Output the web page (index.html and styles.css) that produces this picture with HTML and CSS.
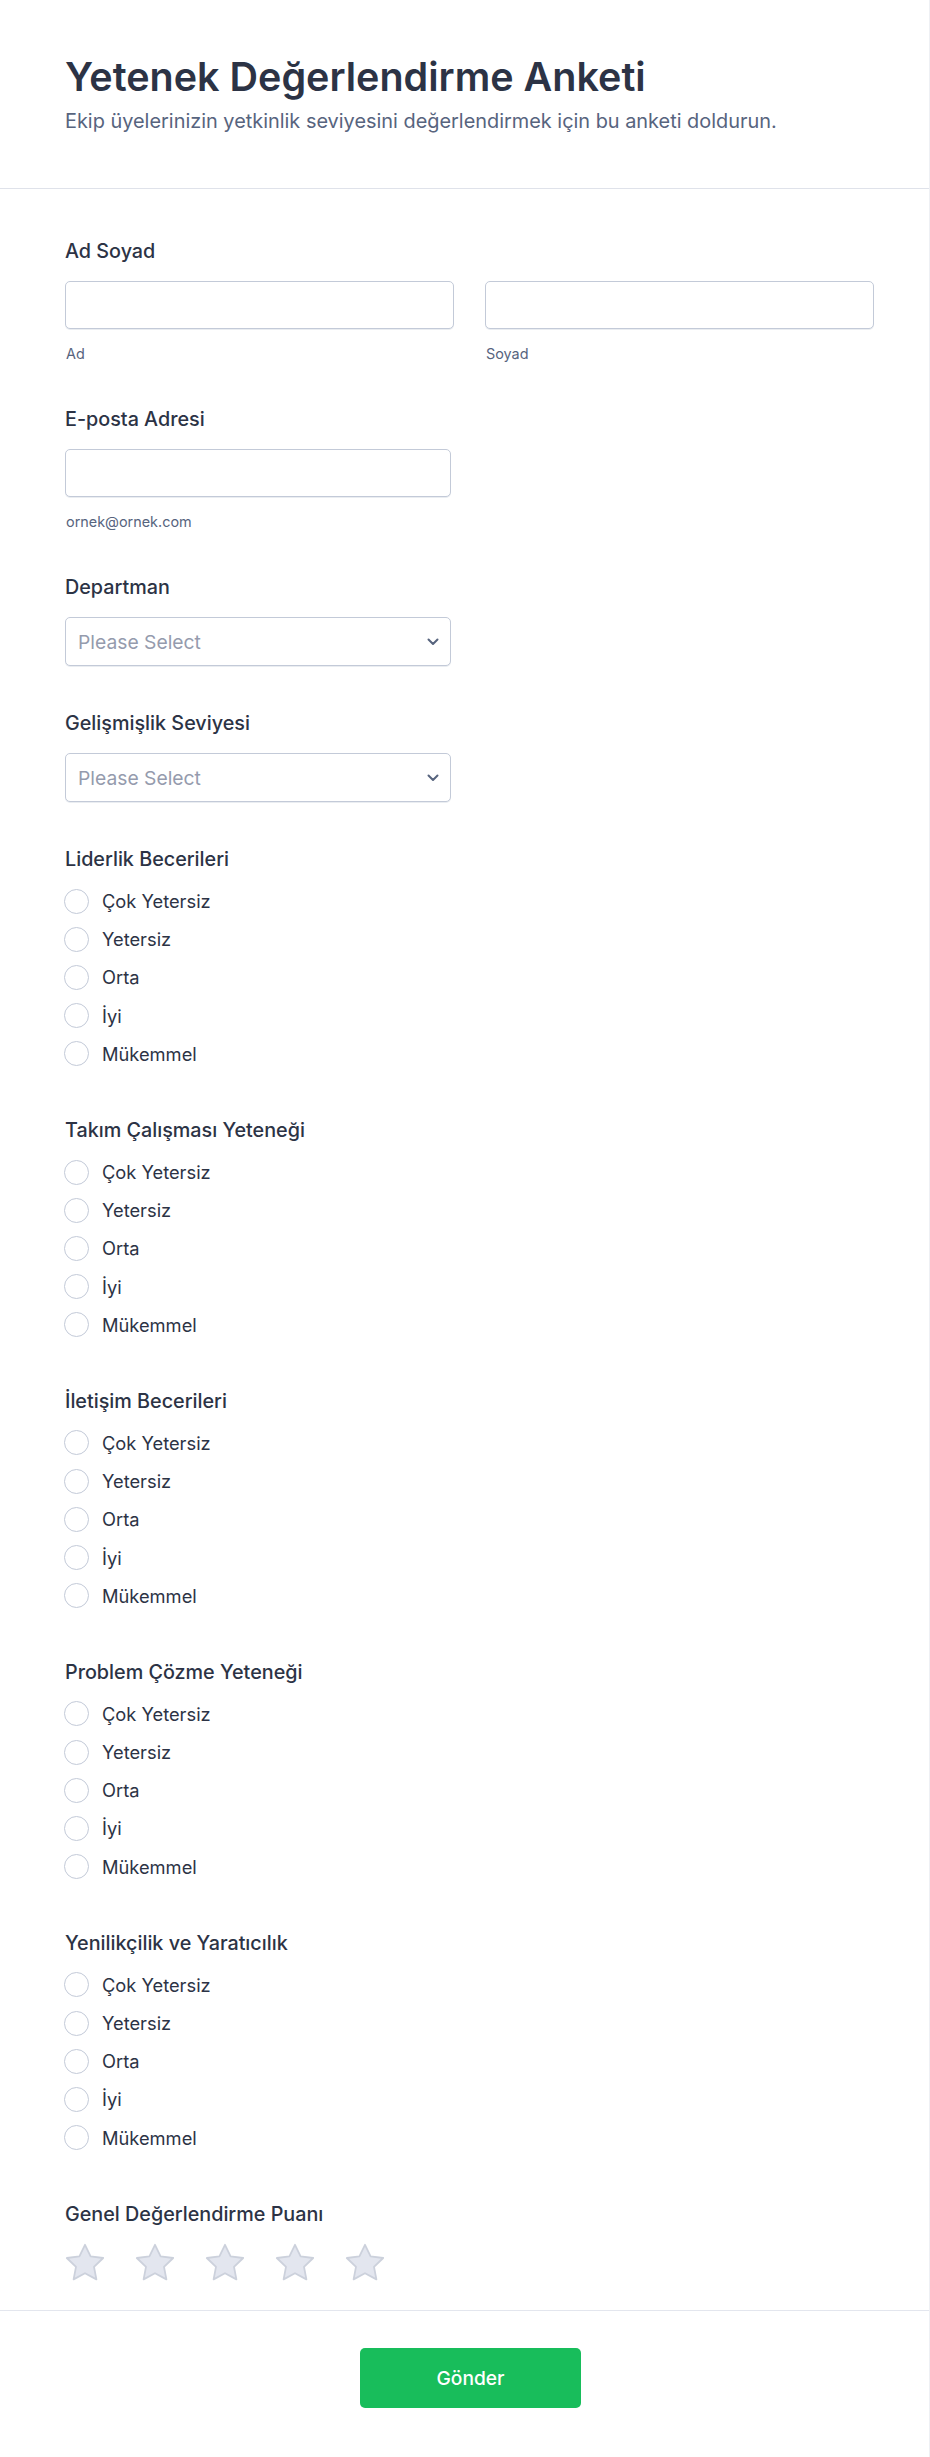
FILE: index.html
```html
<!DOCTYPE html>
<html lang="tr">
<head>
<meta charset="utf-8">
<title>Yetenek Değerlendirme Anketi</title>
<link rel="stylesheet" href="styles.css">
</head>
<body>
<div class="page">
  <header class="header">
    <h1 class="title">Yetenek Değerlendirme Anketi</h1>
    <p class="subtitle">Ekip üyelerinizin yetkinlik seviyesini değerlendirmek için bu anketi doldurun.</p>
  </header>

  <form class="form">
    <div class="field">
      <label class="label">Ad Soyad</label>
      <div class="name-row">
        <div class="name-col">
          <input class="input" type="text">
          <span class="sublabel">Ad</span>
        </div>
        <div class="name-col">
          <input class="input" type="text">
          <span class="sublabel">Soyad</span>
        </div>
      </div>
    </div>

    <div class="field">
      <label class="label">E-posta Adresi</label>
      <input class="input input-single" type="email">
      <span class="sublabel">ornek@ornek.com</span>
    </div>

    <div class="field">
      <label class="label">Departman</label>
      <div class="select-wrap">
        <select class="select"><option>Please Select</option></select>
        <svg class="chevron" width="12" height="8" viewBox="0 0 12 8"><path d="M1.5 1.5 6 6l4.5-4.5" fill="none" stroke="#57647e" stroke-width="2" stroke-linecap="round" stroke-linejoin="round"/></svg>
      </div>
    </div>

    <div class="field">
      <label class="label">Gelişmişlik Seviyesi</label>
      <div class="select-wrap">
        <select class="select"><option>Please Select</option></select>
        <svg class="chevron" width="12" height="8" viewBox="0 0 12 8"><path d="M1.5 1.5 6 6l4.5-4.5" fill="none" stroke="#57647e" stroke-width="2" stroke-linecap="round" stroke-linejoin="round"/></svg>
      </div>
    </div>

    <div class="field">
      <label class="label">Liderlik Becerileri</label>
      <div class="choices">
        <label class="choice"><input class="radio" type="radio" name="q1"><span>Çok Yetersiz</span></label>
        <label class="choice"><input class="radio" type="radio" name="q1"><span>Yetersiz</span></label>
        <label class="choice"><input class="radio" type="radio" name="q1"><span>Orta</span></label>
        <label class="choice"><input class="radio" type="radio" name="q1"><span>İyi</span></label>
        <label class="choice"><input class="radio" type="radio" name="q1"><span>Mükemmel</span></label>
      </div>
    </div>

    <div class="field">
      <label class="label">Takım Çalışması Yeteneği</label>
      <div class="choices">
        <label class="choice"><input class="radio" type="radio" name="q2"><span>Çok Yetersiz</span></label>
        <label class="choice"><input class="radio" type="radio" name="q2"><span>Yetersiz</span></label>
        <label class="choice"><input class="radio" type="radio" name="q2"><span>Orta</span></label>
        <label class="choice"><input class="radio" type="radio" name="q2"><span>İyi</span></label>
        <label class="choice"><input class="radio" type="radio" name="q2"><span>Mükemmel</span></label>
      </div>
    </div>

    <div class="field">
      <label class="label">İletişim Becerileri</label>
      <div class="choices">
        <label class="choice"><input class="radio" type="radio" name="q3"><span>Çok Yetersiz</span></label>
        <label class="choice"><input class="radio" type="radio" name="q3"><span>Yetersiz</span></label>
        <label class="choice"><input class="radio" type="radio" name="q3"><span>Orta</span></label>
        <label class="choice"><input class="radio" type="radio" name="q3"><span>İyi</span></label>
        <label class="choice"><input class="radio" type="radio" name="q3"><span>Mükemmel</span></label>
      </div>
    </div>

    <div class="field">
      <label class="label">Problem Çözme Yeteneği</label>
      <div class="choices">
        <label class="choice"><input class="radio" type="radio" name="q4"><span>Çok Yetersiz</span></label>
        <label class="choice"><input class="radio" type="radio" name="q4"><span>Yetersiz</span></label>
        <label class="choice"><input class="radio" type="radio" name="q4"><span>Orta</span></label>
        <label class="choice"><input class="radio" type="radio" name="q4"><span>İyi</span></label>
        <label class="choice"><input class="radio" type="radio" name="q4"><span>Mükemmel</span></label>
      </div>
    </div>

    <div class="field">
      <label class="label">Yenilikçilik ve Yaratıcılık</label>
      <div class="choices">
        <label class="choice"><input class="radio" type="radio" name="q5"><span>Çok Yetersiz</span></label>
        <label class="choice"><input class="radio" type="radio" name="q5"><span>Yetersiz</span></label>
        <label class="choice"><input class="radio" type="radio" name="q5"><span>Orta</span></label>
        <label class="choice"><input class="radio" type="radio" name="q5"><span>İyi</span></label>
        <label class="choice"><input class="radio" type="radio" name="q5"><span>Mükemmel</span></label>
      </div>
    </div>

    <div class="field">
      <label class="label">Genel Değerlendirme Puanı</label>
      <div class="stars">
        <svg class="star" viewBox="2.5 2.5 19 18"><path d="M12 2.9l2.8 5.8 6.3.8-4.6 4.4 1.2 6.3L12 17.1l-5.7 3.1 1.2-6.3-4.6-4.4 6.3-.8z"/></svg>
        <svg class="star" viewBox="2.5 2.5 19 18"><path d="M12 2.9l2.8 5.8 6.3.8-4.6 4.4 1.2 6.3L12 17.1l-5.7 3.1 1.2-6.3-4.6-4.4 6.3-.8z"/></svg>
        <svg class="star" viewBox="2.5 2.5 19 18"><path d="M12 2.9l2.8 5.8 6.3.8-4.6 4.4 1.2 6.3L12 17.1l-5.7 3.1 1.2-6.3-4.6-4.4 6.3-.8z"/></svg>
        <svg class="star" viewBox="2.5 2.5 19 18"><path d="M12 2.9l2.8 5.8 6.3.8-4.6 4.4 1.2 6.3L12 17.1l-5.7 3.1 1.2-6.3-4.6-4.4 6.3-.8z"/></svg>
        <svg class="star" viewBox="2.5 2.5 19 18"><path d="M12 2.9l2.8 5.8 6.3.8-4.6 4.4 1.2 6.3L12 17.1l-5.7 3.1 1.2-6.3-4.6-4.4 6.3-.8z"/></svg>
      </div>
    </div>
  </form>

  <footer class="footer">
    <button class="submit" type="button">Gönder</button>
  </footer>
</div>
</body>
</html>
```
FILE: styles.css
```css
* { box-sizing: border-box; }

html, body {
  margin: 0;
  padding: 0;
  background: #ffffff;
}

body {
  font-family: Inter, "Noto Sans", "Liberation Sans", sans-serif;
  color: #2c3345;
}

.page {
  width: 930px;
  border-right: 1px solid #eef0f4;
}

.header {
  padding: 53px 65px 53px;
  border-bottom: 1px solid #dfe2ea;
}

.title {
  margin: 0;
  font-size: 39.5px;
  line-height: 48px;
  font-weight: 600;
  color: #2c3345;
}

.subtitle {
  margin: 6px 0 0;
  font-size: 19.9px;
  line-height: 28px;
  font-weight: 400;
  color: #57647e;
}

.form {
  padding: 50px 56px 30px 65px;
  display: flex;
  flex-direction: column;
  gap: 45px;
}

.field {
  display: flex;
  flex-direction: column;
  align-items: flex-start;
}

.label {
  display: block;
  font-size: 19.75px;
  line-height: 24px;
  font-weight: 500;
  color: #2c3345;
  margin-bottom: 18px;
}

.name-row {
  display: grid;
  grid-template-columns: 389px 389px;
  column-gap: 31px;
  width: 100%;
}

.name-col {
  display: flex;
  flex-direction: column;
}

.input {
  display: block;
  width: 100%;
  height: 48px;
  border: 1px solid #c3cad8;
  border-radius: 5px;
  background: #fff;
  font-family: inherit;
  font-size: 19.3px;
  color: #2c3345;
  padding: 0 12px;
  outline: none;
  box-shadow: 0 1px 0 rgba(195, 202, 216, 0.35);
}

.input-single {
  width: 386px;
}

.sublabel {
  display: block;
  margin-top: 17px;
  font-size: 14.4px;
  line-height: 16px;
  color: #57647e;
  padding-left: 1px;
}

.select-wrap {
  position: relative;
  width: 386px;
  height: 49px;
}

.select {
  display: block;
  width: 100%;
  height: 49px;
  -webkit-appearance: none;
  appearance: none;
  border: 1px solid #c3cad8;
  border-radius: 5px;
  background: #fff;
  font-family: inherit;
  font-size: 19.3px;
  color: #959bad;
  padding: 0 36px 0 12px;
  outline: none;
  box-shadow: 0 1px 0 rgba(195, 202, 216, 0.35);
}

.chevron {
  position: absolute;
  right: 12px;
  top: 21px;
  pointer-events: none;
}

.choices {
  display: flex;
  flex-direction: column;
  margin-top: -7px;
}

.choice {
  display: flex;
  align-items: center;
  height: 38.2px;
  gap: 13px;
  font-size: 18.3px;
  color: #2c3345;
}

.radio {
  -webkit-appearance: none;
  appearance: none;
  margin: 0 0 0 -1px;
  width: 25px;
  height: 25px;
  border: 1.5px solid #c3cad8;
  border-radius: 50%;
  background: #fff;
  flex: none;
}

.stars {
  display: flex;
  gap: 32px;
  margin-top: 0;
  padding-left: 1px;
}

.star {
  width: 38px;
  height: 36px;
  overflow: visible;
  fill: #e3e6ef;
  stroke: #ccd1dc;
  stroke-width: 0.9;
  stroke-linejoin: round;
}

.footer {
  border-top: 1px solid #e3e6ee;
  display: flex;
  justify-content: center;
  padding: 37px 0 49px 12px;
}

.submit {
  width: 221px;
  height: 60px;
  border: none;
  border-radius: 5px;
  background: #18bd5b;
  color: #ffffff;
  font-family: inherit;
  font-size: 19.2px;
  font-weight: 500;
  cursor: pointer;
}
```
